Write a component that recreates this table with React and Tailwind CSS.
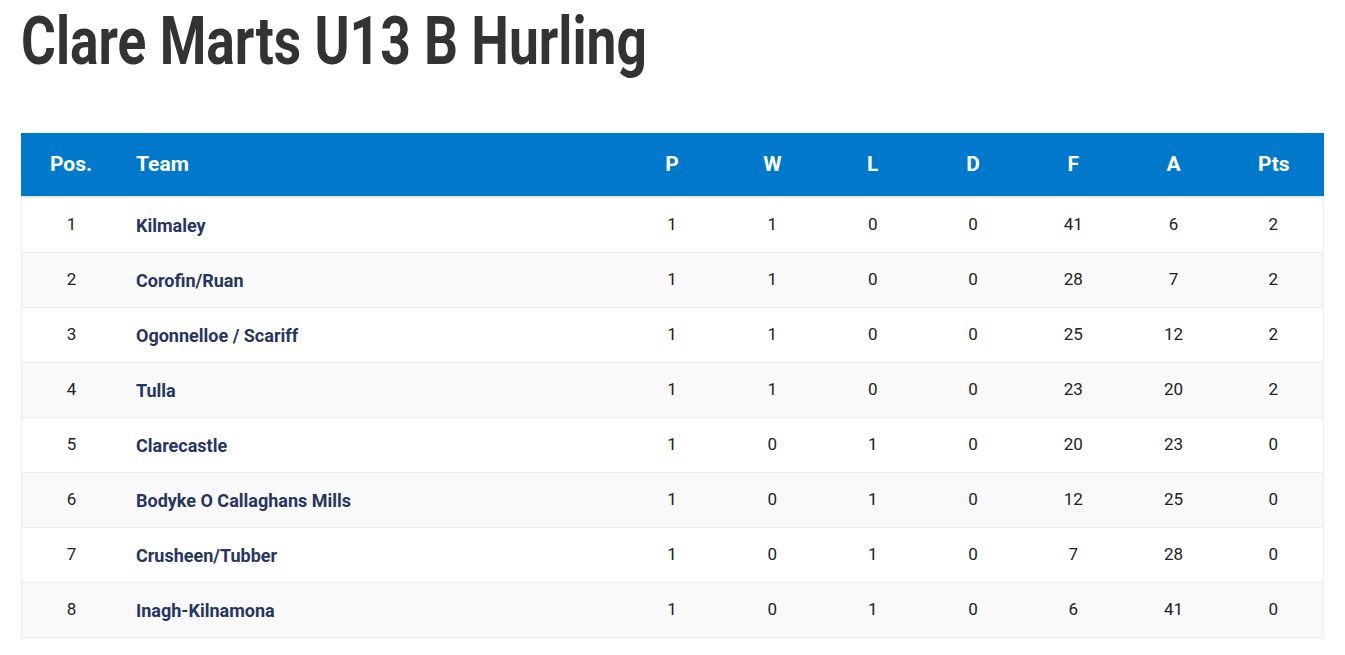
import React from 'react';

const rows = [
  [1, 'Kilmaley', 1, 1, 0, 0, 41, 6, 2],
  [2, 'Corofin/Ruan', 1, 1, 0, 0, 28, 7, 2],
  [3, 'Ogonnelloe / Scariff', 1, 1, 0, 0, 25, 12, 2],
  [4, 'Tulla', 1, 1, 0, 0, 23, 20, 2],
  [5, 'Clarecastle', 1, 0, 1, 0, 20, 23, 0],
  [6, 'Bodyke O Callaghans Mills', 1, 0, 1, 0, 12, 25, 0],
  [7, 'Crusheen/Tubber', 1, 0, 1, 0, 7, 28, 0],
  [8, 'Inagh-Kilnamona', 1, 0, 1, 0, 6, 41, 0],
];

const stats = ['P', 'W', 'L', 'D', 'F', 'A', 'Pts'];

const App = () => (
  <div className="min-h-[655px] bg-white px-[21px] font-['Roboto',sans-serif]">
    <h1 className="pt-[4px] h-[133px] text-[66px] leading-[76px] font-bold text-[#333333] whitespace-nowrap origin-left scale-x-[0.808]">
      Clare Marts U13 B Hurling
    </h1>
    <div className="w-[1303px]">
      <div className="flex h-[63px] items-center bg-[#0079cc] text-white text-[21px] font-bold border-b-2 border-[#e4e9ec] box-content">
        <div className="w-[100px] text-center">Pos.</div>
        <div className="flex-1 pl-[15px]">Team</div>
        {stats.map((s) => (
          <div key={s} className="w-[100.3px] text-center">{s}</div>
        ))}
      </div>
      {rows.map((r, i) => (
        <div
          key={r[0]}
          className={`flex h-[55px] items-center border-x border-b border-[#ececec] text-[17px] text-[#222222] ${
            i % 2 === 1 ? 'bg-[#f9f9f9]' : 'bg-white'
          }`}
        >
          <div className="w-[99px] text-center">{r[0]}</div>
          <div className="flex-1 pl-[15px] text-[18px] font-bold text-[#26365f]">{r[1]}</div>
          {r.slice(2).map((v, j) => (
            <div key={j} className={`text-center ${j === 6 ? 'w-[99.3px]' : 'w-[100.3px]'}`}>{v}</div>
          ))}
        </div>
      ))}
    </div>
  </div>
);

export default App;
